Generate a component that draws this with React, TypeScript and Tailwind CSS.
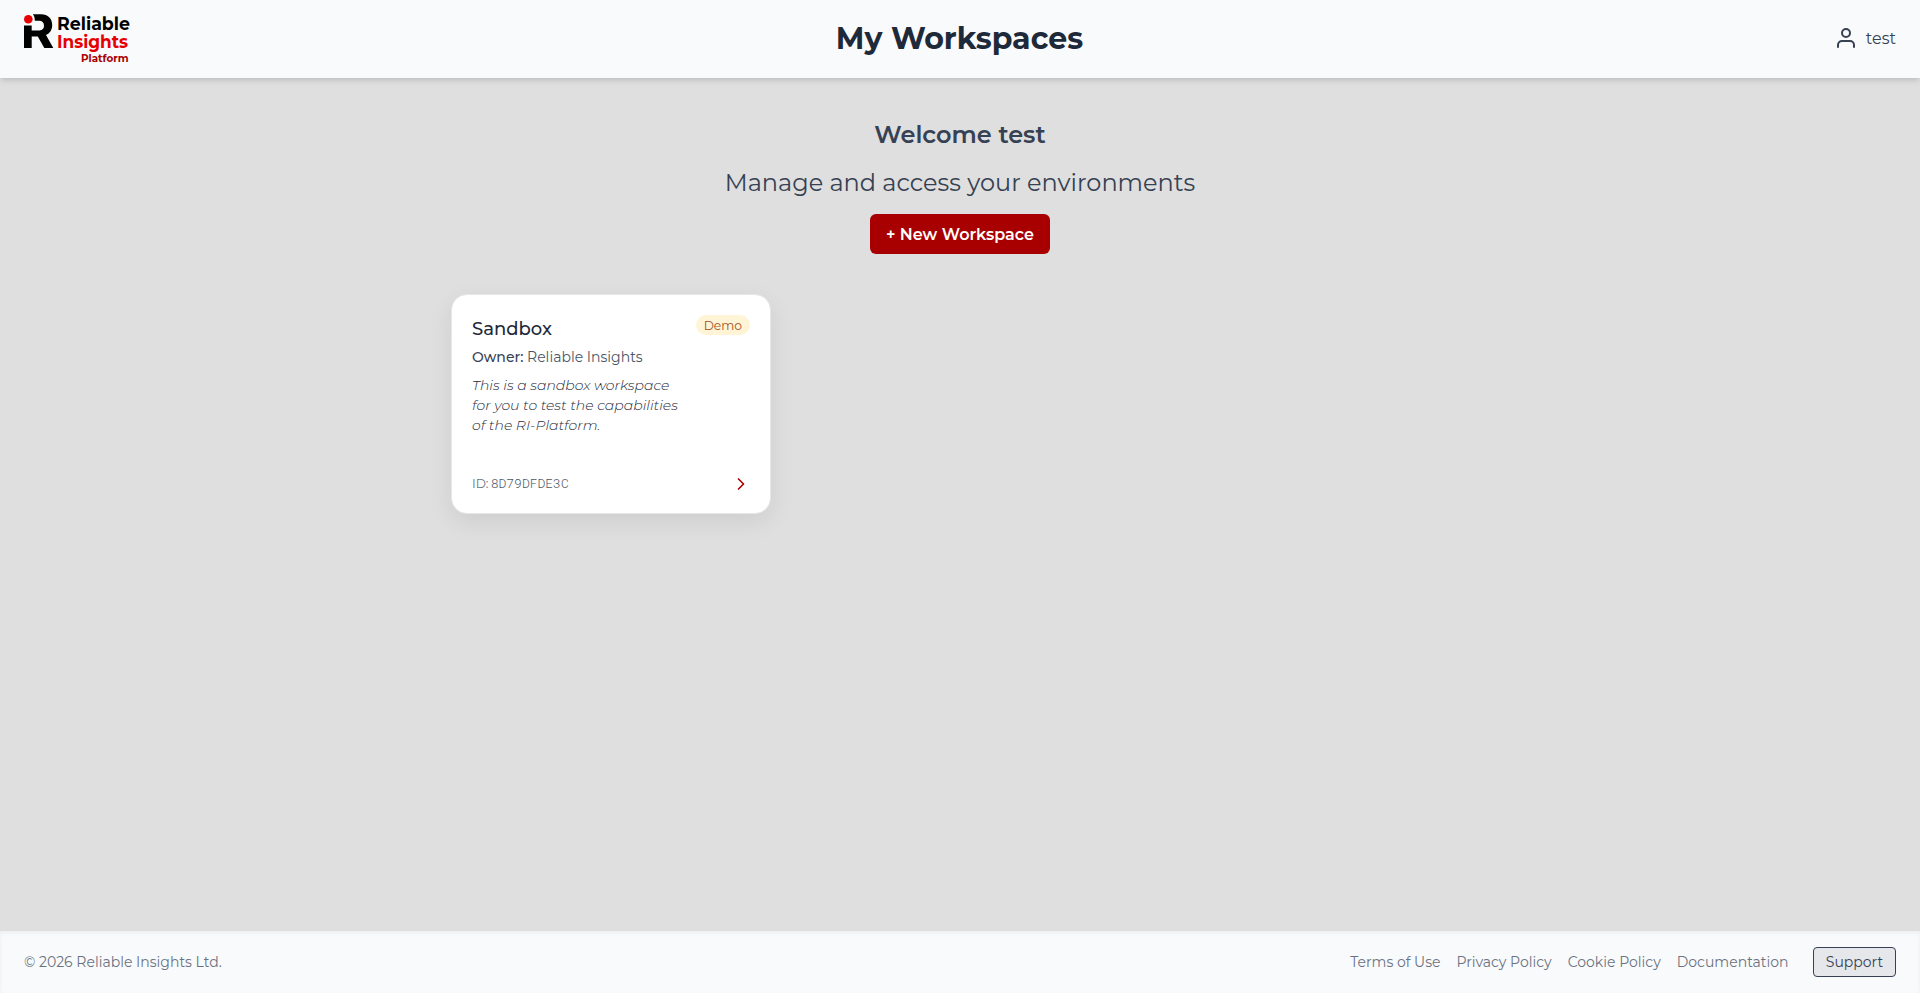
import { ChevronRight } from "lucide-react";

interface Workspace {
  id: string; name: string; owner: string; description: string; badge?: string;
}

const workspaces: Workspace[] = [
  {
    id: "8D79DFDE3C",
    name: "Sandbox",
    owner: "Reliable Insights",
    description: "This is a sandbox workspace for you to test the capabilities of the RI-Platform.",
    badge: "Demo",
  },
];

const footerLinks = ["Terms of Use", "Privacy Policy", "Cookie Policy", "Documentation"];

function Logo() {
  return (
    <svg width="108" height="54" viewBox="0 0 108 54" fontFamily="Montserrat, Inter, sans-serif">
      <circle cx="4.3" cy="7.2" r="4.3" fill="#e60000" />
      <path fill="#000"
        d="M0 13.5H7.7V18.5H15.5C18.5 18.5 20 16.5 20 13.8C20 10.5 18 8.8 15 8.8H10.8C10.8 6 10.3 4 8.8 2.3H17C24 2.3 28.2 6.5 28.2 13C28.2 17.8 26 21.3 22 23L29.3 36H20.3L13.8 24.5H7.7V36H0Z" />
      <text x="33" y="18" fontSize="17.5" fontWeight="700" textLength="73" lengthAdjust="spacingAndGlyphs" fill="#000">Reliable</text>
      <text x="33" y="36" fontSize="17.5" fontWeight="700" textLength="71" lengthAdjust="spacingAndGlyphs" fill="#e60000">Insights</text>
      <text x="57" y="49.5" fontSize="11" fontWeight="700" textLength="47.5" lengthAdjust="spacingAndGlyphs" fill="#a80000">Platform</text>
    </svg>
  );
}

function UserIcon() {
  return (
    <svg className="mb-0.5" width="24" height="24" viewBox="0 0 24 24" fill="none" stroke="#374151" strokeWidth="2" strokeLinecap="round" strokeLinejoin="round">
      <path d="M20 21v-2a4 4 0 0 0-4-4H8a4 4 0 0 0-4 4v2" />
      <circle cx="12" cy="7" r="4" />
    </svg>
  );
}

function WorkspaceCard({ ws }: { ws: Workspace }) {
  return (
    <div className="flex h-[220px] w-80 flex-col justify-between rounded-2xl border border-gray-200 bg-white p-5 pb-[19px] shadow-[0_8px_24px_rgba(0,0,0,0.08)]">
      <div className="flex items-start justify-between">
        <div className="w-[212px]">
          <h3 className="text-[18px] leading-7 font-medium text-gray-800">{ws.name}</h3>
          <p className="mt-1 text-sm leading-5 whitespace-nowrap text-gray-600">
            <span className="font-medium text-gray-700">Owner:</span> {ws.owner}
          </p>
          <p className="mt-2 text-sm leading-5 font-light text-gray-800 italic">{ws.description}</p>
        </div>
        {ws.badge && (
          <span className="rounded-full bg-[#fff5d6] px-2 pt-0.5 text-[12.3px] leading-[18px] text-[#a3531f]">{ws.badge}</span>
        )}
      </div>
      <div className="flex items-center justify-between text-[12.3px] text-gray-500">
        <span>ID: <span className="-ml-px font-['Roboto_Mono','Liberation_Mono',monospace] text-[13px] font-light text-gray-600">{ws.id}</span></span>
        <ChevronRight className="-mr-px" size={20} color="#b00000" />
      </div>
    </div>
  );
}

export default function App() {
  return (
    <div className="flex h-screen flex-col bg-[#dfdfdf] font-['Montserrat','Inter',sans-serif]">
      <header className="z-10 grid h-[78px] shrink-0 grid-cols-3 items-center bg-gray-50 px-6 shadow-md">
        <Logo />
        <h1 className="pr-px text-center text-[30px] leading-9 font-bold text-gray-800">My Workspaces</h1>
        <div className="flex items-center justify-end gap-2 text-gray-700">
          <UserIcon />
          <span>test</span>
        </div>
      </header>
      <main className="flex flex-1 flex-col items-center pt-[41px]">
        <h2 className="text-2xl font-semibold text-gray-700">Welcome test</h2>
        <p className="mt-4 text-2xl text-gray-700">Manage and access your environments</p>
        <button className="mt-[15px] h-10 w-[180px] rounded-md bg-[#a80000] pt-0.5 font-semibold text-white">+ New Workspace</button>
        <div className="mt-10 flex w-[1018px]">
          {workspaces.map((ws) => <WorkspaceCard key={ws.id} ws={ws} />)}
        </div>
      </main>
      <footer className="flex h-[62px] shrink-0 items-center justify-between bg-gray-50 px-6 text-sm text-gray-500 shadow-inner">
        <span>© 2026 Reliable Insights Ltd.</span>
        <nav className="flex items-center gap-4">
          {footerLinks.map((label) => <a key={label}>{label}</a>)}
          <button className="ml-[8.5px] h-[30px] w-[83px] rounded border border-gray-700 bg-gray-200 text-gray-700">Support</button>
        </nav>
      </footer>
    </div>
  );
}
